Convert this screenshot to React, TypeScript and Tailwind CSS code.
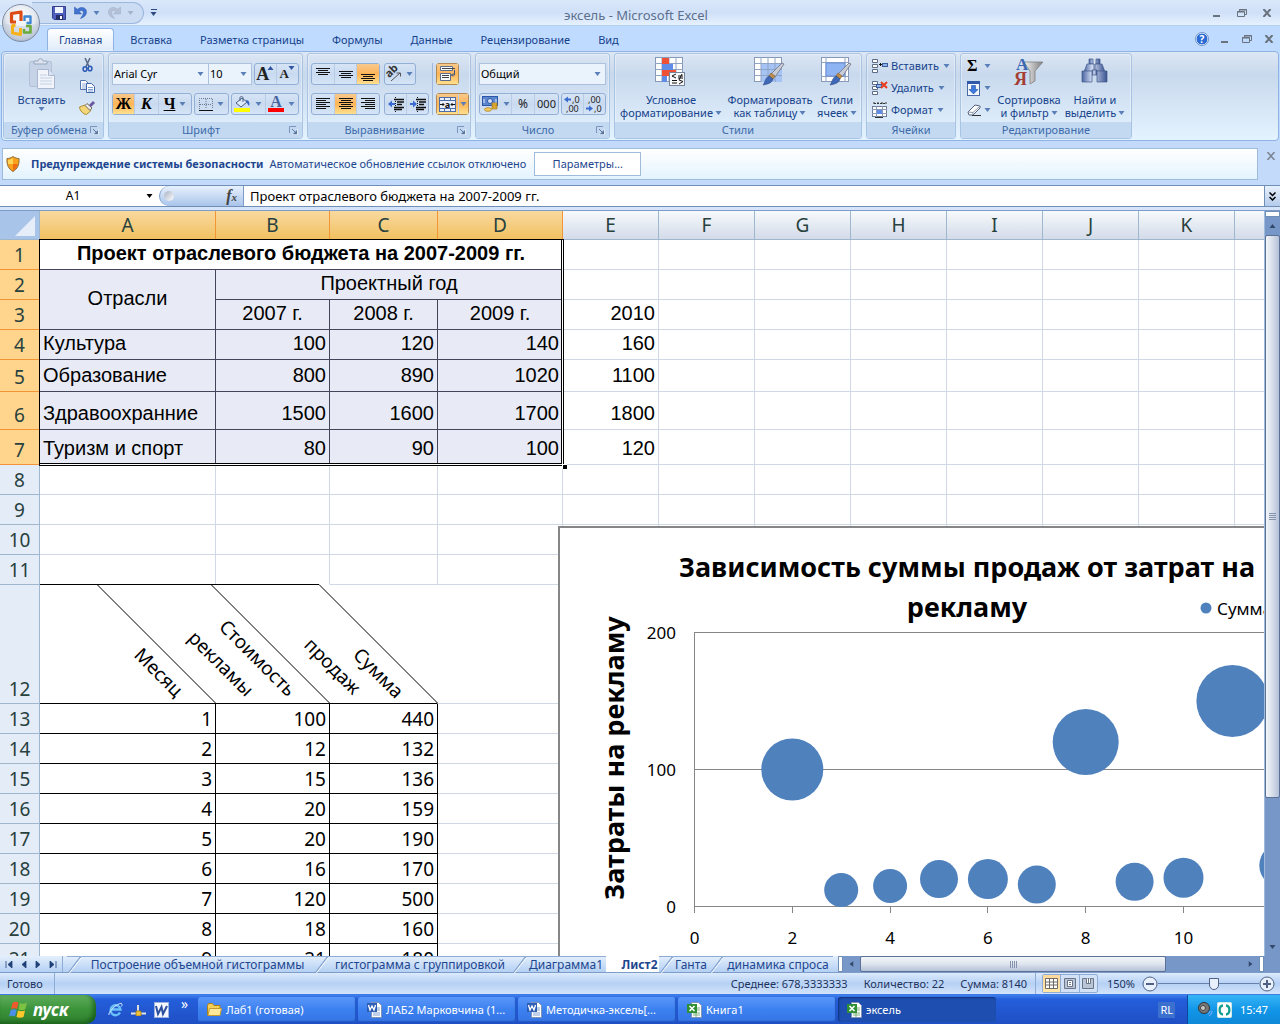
import { useState, type ReactNode } from 'react'
import clsx from 'clsx'

/* ---------- small shared pieces ---------- */

function Caret({ className }: { className?: string }) {
    return (
        <svg width="7" height="4" viewBox="0 0 7 4" className={clsx('shrink-0', className ?? 'text-[#5a7fb8]')} aria-hidden="true">
            <path d="M0.5 0h6L3.5 4z" fill="currentColor" />
        </svg>
    )
}

function Launcher() {
    return (
        <svg width="9" height="9" viewBox="0 0 9 9" aria-hidden="true">
            <path d="M0.5 7V0.5H7" fill="none" stroke="#7a94ba" />
            <path d="M3 3l3 3" stroke="#5a769e" />
            <path d="M8 4v4.5H3.5z" fill="#5a769e" />
            <path d="M8.5 3v5.5H3" fill="none" stroke="#fff" strokeOpacity=".5" />
        </svg>
    )
}

interface GroupProps {
    title: string
    className: string
    launcher?: boolean
    children: ReactNode
}

function Group({ title, className, launcher, children }: GroupProps) {
    return (
        <section
            className={clsx(
                'flex shrink-0 flex-col rounded-[3px] border border-[#a9c4e2] shadow-[inset_0_0_0_1px_rgba(255,255,255,0.35)]',
                className
            )}
        >
            <div className="min-h-0 flex-1">{children}</div>
            <div className="flex h-4 items-center rounded-b-[2px] bg-[#c2d9f1] px-1 text-[#3e6aaa]">
                <h2 className="flex-1 text-center whitespace-nowrap">{title}</h2>
                {launcher && (
                    <button aria-label={title}>
                        <Launcher />
                    </button>
                )}
            </div>
        </section>
    )
}

function ButtonSet({ children, className }: { children: ReactNode; className?: string }) {
    return (
        <div
            className={clsx(
                'flex h-[22px] divide-x divide-[#b8cce6] rounded-[3px] border border-[#93afd6] bg-linear-to-b from-[#d6e4f5] via-[#c9daf0] to-[#d5e4f6]',
                className
            )}
        >
            {children}
        </div>
    )
}

interface ToolProps {
    label: string
    active?: boolean
    className?: string
    children: ReactNode
}

function Tool({ label, active, className, children }: ToolProps) {
    return (
        <button
            aria-label={label}
            className={clsx(
                'flex h-full items-center justify-center gap-1',
                className ?? 'flex-1',
                active && 'bg-linear-to-b from-[#f8c98b] via-[#fdb456] to-[#ffe08e]'
            )}
        >
            {children}
        </button>
    )
}

function Lines({ rows, className }: { rows: [number, number, number][]; className?: string }) {
    return (
        <svg width="16" height="16" viewBox="0 0 16 16" className={className} aria-hidden="true">
            {rows.map(([x, y, w], i) => (
                <rect key={i} x={x} y={y} width={w} height="1" fill="#111" />
            ))}
        </svg>
    )
}

/* ---------- icons ---------- */

function OfficeOrb() {
    return (
        <svg width="40" height="40" viewBox="0 0 40 40" aria-hidden="true">
            <defs>
                <radialGradient id="orb" cx=".5" cy=".35" r=".65">
                    <stop offset="0" stopColor="#fff" />
                    <stop offset=".6" stopColor="#e3e8ef" />
                    <stop offset="1" stopColor="#aab6c8" />
                </radialGradient>
            </defs>
            <circle cx="20" cy="20" r="18.5" fill="url(#orb)" stroke="#7f8ea6" />
            <path d="M3 20a17 17 0 0 0 34 0c-8 4-26 4-34 0z" fill="#c3cedd" opacity=".5" />
            <g fill="none" strokeLinejoin="round">
                <path d="M15 19h-4.500V10.500L20 9v9" stroke="#dd4b14" strokeWidth="3.200" />
                <path d="M23.500 18v-4.500h6V20h-4" stroke="#3f86d2" strokeWidth="2.400" />
                <path d="M14.500 22.500h-3V30l8 1.500V25" stroke="#f6b21b" strokeWidth="3" />
                <path d="M25 23h4.500v6.500h-6.500V26" stroke="#69ac3b" strokeWidth="2.600" />
            </g>
        </svg>
    )
}

function SaveIcon() {
    return (
        <svg width="14" height="14" viewBox="0 0 14 14" aria-hidden="true">
            <path d="M.5.5h13v13H2L.5 12z" fill="#4f5fc0" stroke="#343f8f" />
            <rect x="3" y="1" width="8" height="6" fill="#eef3fc" />
            <rect x="4" y="9" width="7" height="5" fill="#232e66" />
            <rect x="8" y="10" width="2" height="3" fill="#fff" />
        </svg>
    )
}

function UndoIcon({ flipped }: { flipped?: boolean }) {
    return (
        <svg width="13" height="13" viewBox="0 0 13 13" className={flipped ? '-scale-x-100' : undefined} aria-hidden="true">
            <path
                d="M.5 1v7h7L5.300 5.500C7.500 3.600 9.500 4.500 9.300 7c-.2 2-1.500 3.500-2.800 5.500C10 11.500 12.700 9 12.500 5.500 12.200 1.500 7 0 3.300 3.300z"
                fill={flipped ? '#b4c0d6' : '#4273cf'}
                stroke={flipped ? '#a0adc4' : '#2c55ac'}
                strokeWidth=".5"
            />
        </svg>
    )
}

function PasteIcon() {
    return (
        <svg width="28" height="32" viewBox="0 0 28 32" aria-hidden="true">
            <rect x="1.500" y="3.500" width="22" height="25" rx="1.500" fill="#c6d3e6" stroke="#b3c1d8" />
            <path d="M6 6V3h4c0-3 5-3 5 0h4v3z" fill="#dce3ee" stroke="#97a7c0" />
            <path d="M9.500 11.500h11l6 6V30.500h-17z" fill="#f1f5fb" stroke="#a9b8d0" />
            <path d="M20.500 11.500v6h6" fill="#dbe4f1" stroke="#a9b8d0" />
            <path d="M12 17h7M12 20h12M12 23h12M12 26h12" stroke="#c3cfe0" />
        </svg>
    )
}

function CutIcon() {
    return (
        <svg width="11" height="14" viewBox="0 0 11 14" fill="none" aria-hidden="true">
            <path d="M3 0l4 8.500M8 0L4 8.500" stroke="#566783" strokeWidth="1.500" />
            <ellipse cx="3" cy="11" rx="1.900" ry="2.300" stroke="#2d5cb5" strokeWidth="1.600" />
            <ellipse cx="8" cy="10.500" rx="1.900" ry="2.300" stroke="#2d5cb5" strokeWidth="1.600" />
        </svg>
    )
}

function CopyIcon() {
    return (
        <svg width="15" height="13" viewBox="0 0 15 13" aria-hidden="true">
            <path d="M.5.5h5l3 3v6h-8z" fill="#fff" stroke="#5476ae" />
            <path d="M2 4h4M2 6h4M2 8h4" stroke="#8eacd8" />
            <path d="M6.500 3.500h5l3 3v6h-8z" fill="#fff" stroke="#3e65a8" />
            <path d="M8 7.500h5M8 9.500h5M8 11h5" stroke="#7d9fd4" />
        </svg>
    )
}

function BrushIcon() {
    return (
        <svg width="16" height="14" viewBox="0 0 16 14" aria-hidden="true">
            <path d="M.5 6l5.500-2 6 5.500-4.500 4C4 13 1 10 .5 6z" fill="#f3d879" stroke="#b08b31" />
            <path d="M6 4.500l2-2 5 4.500-2 2.500z" fill="#e8ebf3" stroke="#7b6a4a" />
            <path d="M10 4l4-4 2 2-4 4z" fill="#6a55a0" />
        </svg>
    )
}

function BordersIcon() {
    return (
        <svg width="14" height="13" viewBox="0 0 14 13" fill="none" aria-hidden="true">
            <path d="M.5 11V.5h13V11M7 1v10M1 6.500h12" stroke="#6d7b92" strokeDasharray="1 1" />
            <path d="M0 12.500h14" stroke="#111" />
        </svg>
    )
}

function FillIcon() {
    return (
        <svg width="17" height="16" viewBox="0 0 17 16" aria-hidden="true">
            <path d="M2 7l6-5 5 4-6 5z" fill="#dfeaf8" stroke="#4a5f84" />
            <path d="M6 5V1.500c1-2 3-1 3 .5v4" fill="none" stroke="#4a5f84" />
            <path d="M12 4c3 0 4 3 3 6l-2-3z" fill="#3366c4" />
            <rect y="12" width="16" height="4" fill="#ffff00" />
        </svg>
    )
}

function FontColorIcon() {
    return (
        <svg width="16" height="16" viewBox="0 0 16 16" className="overflow-visible font-['Liberation_Serif',serif]" aria-hidden="true">
            <text x="8" y="11" textAnchor="middle" fontSize="16" fontWeight="bold" fill="#45649f">
                A
            </text>
            <rect y="12" width="16" height="4" fill="#ff0000" />
        </svg>
    )
}

function OrientationIcon() {
    return (
        <svg width="15" height="15" viewBox="0 0 15 15" className="overflow-visible" aria-hidden="true">
            <text x="0" y="8" fontSize="11" fontWeight="bold" fill="#333" transform="rotate(-45 5 7)">
                ab
            </text>
            <path d="M4 14L13 6M9.500 6H13.500V9.500" fill="none" stroke="#555" />
        </svg>
    )
}

function IndentIcon({ right }: { right?: boolean }) {
    return (
        <svg width="16" height="15" viewBox="0 0 16 15" aria-hidden="true">
            <path d="M7.500 0v15" stroke="#111" strokeDasharray="1 1" />
            <path d="M6 2.500h10M9 5h7M9 7.500h5M6 10.500h10M6 12.500h8" stroke="#111" strokeWidth="1.500" />
            <path d={right ? 'M0 6h3V3.500L7 7 3 10.500V8H0z' : 'M7 6H4V3.500L0 7l4 3.500V8h3z'} fill="#3a6bd0" />
        </svg>
    )
}

function WrapIcon() {
    return (
        <svg width="17" height="16" viewBox="0 0 17 16" aria-hidden="true">
            <path d="M1.500.5h12v4h-12z" fill="#f6f8fc" stroke="#5b6b88" />
            <path d="M3 2.500h13" stroke="#444" />
            <path d="M1.500 7.500h10v7h-10z" fill="#f6f8fc" stroke="#5b6b88" />
            <path d="M3 9.500h7M3 11.500h7" stroke="#444" />
            <path d="M15.500 4v5h-3M14 7.500L12.500 9l1.500 1.500" fill="none" stroke="#35518a" />
        </svg>
    )
}

function MergeIcon() {
    return (
        <svg width="17" height="15" viewBox="0 0 17 15" className="overflow-visible" aria-hidden="true">
            <rect x=".5" y=".5" width="16" height="14" fill="#e9f0fb" stroke="#4c6ea8" />
            <path d="M0 3.500h17M0 11.500h17M5.500 0v3M11.500 0v3M5.500 12v3M11.500 12v3" stroke="#4c6ea8" />
            <text x="8.500" y="10.500" textAnchor="middle" fontSize="9" fontWeight="bold" fill="#111">
                a
            </text>
            <path d="M1 7.500h4M12 7.500h4M3.500 6L5 7.500 3.500 9M13.500 6L12 7.500 13.500 9" fill="none" stroke="#111" />
        </svg>
    )
}

function MoneyIcon() {
    return (
        <svg width="17" height="16" viewBox="0 0 17 16" aria-hidden="true">
            <rect x=".5" y=".5" width="15" height="9" fill="#5c87d0" stroke="#2c57a5" />
            <circle cx="8" cy="5" r="2.500" fill="#d4e2f8" stroke="#2c57a5" />
            <path d="M2 3v4M14 3v4" stroke="#e4edfb" />
            <path d="M10 7h5v6h-5z" fill="#f0bf3f" stroke="#a87412" strokeWidth=".7" />
            <path d="M10 9h5M10 11h5" stroke="#a87412" strokeWidth=".7" />
            <ellipse cx="6" cy="13.500" rx="3.500" ry="1.800" fill="#f5cf5c" stroke="#a87412" strokeWidth=".7" />
        </svg>
    )
}

function DecimalIcon({ less }: { less?: boolean }) {
    return (
        <svg width="17" height="16" viewBox="0 0 17 16" fontSize="9" fill="#222" className="overflow-visible" aria-hidden="true">
            <text x={less ? 2 : 8} y="7">{less ? ',00' : ',0'}</text>
            <text x={less ? 8 : 2} y="16">{less ? ',0' : ',00'}</text>
            <path
                d={less ? 'M0 11.500h3V9.500l4 3-4 3v-2H0z' : 'M7 2.500H4V.5L0 3.500l4 3v-2h3z'}
                fill="#3a6bd0"
            />
        </svg>
    )
}

function GridBase({ tint }: { tint?: boolean }) {
    return (
        <>
            <rect x=".5" y=".5" width="27" height="24" fill="#fff" stroke="#8798b8" />
            {tint && <rect x="7" y="6" width="21" height="19" fill="#a6c3f5" />}
            <path d="M7 0v25M14 0v25M21 0v25M0 6.500h28M0 12.500h28M0 18.500h28" stroke="#8fa3c4" fill="none" />
        </>
    )
}

function PaintBrush() {
    return (
        <>
            <path d="M28 6l2 1-9 13-4-3z" fill="#c7ccd6" stroke="#6c7483" strokeWidth=".8" />
            <path d="M17 16l4 3-2 3-4-3z" fill="#c18f4a" stroke="#7d5a28" strokeWidth=".6" />
            <path d="M15 19l4 3c-1 4-5 5-10 6 2-2 2-7 6-9z" fill="#3f69b8" stroke="#274682" strokeWidth=".6" />
        </>
    )
}

function ConditionalIcon() {
    return (
        <svg width="32" height="30" viewBox="0 0 32 30" aria-hidden="true">
            <GridBase />
            <rect x="7" y="1" width="7" height="6" fill="#ee5135" />
            <rect x="7" y="7" width="11" height="6" fill="#5e8ce6" />
            <rect x="7" y="13" width="14" height="6" fill="#ee5135" />
            <rect x="7" y="19" width="5" height="6" fill="#5e8ce6" />
            <rect x="14.500" y="15.500" width="15" height="13" fill="#f7f8fa" stroke="#76839b" />
            <path d="M21 17l-4 2 4 2M17 23.500h5M17 26h5M23 19h5M23 21h5M27 17l-3 6M24 23l4 1.500-4 2.500" fill="none" stroke="#111" />
        </svg>
    )
}

function TableStyleIcon() {
    return (
        <svg width="32" height="30" viewBox="0 0 32 30" aria-hidden="true">
            <GridBase tint />
            <PaintBrush />
        </svg>
    )
}

function CellStyleIcon() {
    return (
        <svg width="32" height="30" viewBox="0 0 32 30" aria-hidden="true">
            <rect x=".5" y=".5" width="27" height="24" fill="#fff" stroke="#8798b8" />
            <path d="M5 0v25M24 0v25M0 5.500h28M0 19.500h28" stroke="#8fa3c4" fill="none" />
            <rect x="5" y="6" width="19" height="13" fill="#8fb4f4" stroke="#6d90d2" />
            <PaintBrush />
        </svg>
    )
}

function CellsIcon({ kind }: { kind: 'insert' | 'delete' | 'format' }) {
    if (kind === 'format') {
        return (
            <svg width="16" height="16" viewBox="0 0 16 16" aria-hidden="true">
                <path d="M2 1.500h12M2 0v3M14 0v3M6 0v3M10 0v3" stroke="#333" strokeDasharray="2 1" />
                <rect x=".5" y="4.500" width="14" height="10" fill="#fff" stroke="#6d7d99" />
                <path d="M0 7.500h15M0 11.500h15M4.500 4v11M10.500 4v11" stroke="#8a99b5" />
                <rect x="5" y="8" width="5" height="4" fill="#5e8ce6" />
                <path d="M3 15.500h8" stroke="#333" />
            </svg>
        )
    }
    return (
        <svg width="16" height="14" viewBox="0 0 16 14" aria-hidden="true">
            <path d="M.5.5h5v3h-5zM.5 5.500h5v3h-5zM.5 10.500h5v3h-5z" fill="#fff" stroke="#5d6c87" />
            {kind === 'insert' ? (
                <>
                    <path d="M7 5.500h3M8.500 4v3" stroke="#111" />
                    <rect x="10.500" y="4.500" width="5" height="3" fill="#8fb0ea" stroke="#3c5c98" />
                </>
            ) : (
                <>
                    <rect x="4.500" y="3.500" width="5" height="3" fill="#8fb0ea" stroke="#3c5c98" />
                    <path d="M9 1l6 6M15 1L9 7" stroke="#ea3c1c" strokeWidth="2" />
                </>
            )}
        </svg>
    )
}

function FillDownIcon() {
    return (
        <svg width="13" height="15" viewBox="0 0 13 15" aria-hidden="true">
            <rect x=".5" y=".5" width="12" height="14" fill="#f3f7fd" stroke="#4a6aa6" />
            <path d="M0 1.500h13" stroke="#2f5aa8" strokeWidth="3" />
            <path d="M4.500 4.500h4v4h2.500l-4.500 4.500L2 8.500h2.500z" fill="#3d78dc" stroke="#2355a8" strokeWidth=".6" />
        </svg>
    )
}

function EraserIcon() {
    return (
        <svg width="14" height="12" viewBox="0 0 14 12" aria-hidden="true">
            <path d="M1 8l7-7 5 1v2l-7 7H2z" fill="#fff" stroke="#53617c" />
            <path d="M1 8l5 .5L13 2M6 8.500V11" fill="none" stroke="#8a97b0" />
            <path d="M5 11.500h9" stroke="#333" />
        </svg>
    )
}

function SortIcon() {
    return (
        <svg width="32" height="30" viewBox="0 0 32 30" className="overflow-visible font-['Liberation_Serif',serif]" aria-hidden="true">
            <defs>
                <linearGradient id="funnel">
                    <stop offset="0" stopColor="#f3f3f3" />
                    <stop offset="1" stopColor="#7e7e80" />
                </linearGradient>
            </defs>
            <path d="M11 5h19l-8 9v10l-5 3V14z" fill="url(#funnel)" stroke="#808084" strokeWidth=".8" />
            <text x="3" y="13" fontSize="17" fontWeight="bold" fill="#3c67b4">
                А
            </text>
            <text x="1" y="28" fontSize="18" fontWeight="bold" fill="#a43d36">
                Я
            </text>
        </svg>
    )
}

function FindIcon() {
    return (
        <svg width="30" height="28" viewBox="0 0 30 28" aria-hidden="true">
            <defs>
                <linearGradient id="lens">
                    <stop offset="0" stopColor="#4a64a2" />
                    <stop offset=".4" stopColor="#d3def3" />
                    <stop offset="1" stopColor="#3a5390" />
                </linearGradient>
            </defs>
            <g fill="url(#lens)" stroke="#40568a" strokeWidth=".7">
                <path d="M9 2h4v5H9zM16 2h4v5h-4z" />
                <path d="M7 7h7v8H4zM15 7h7l3 8H15z" />
                <path d="M12 13h5v5h-5z" />
                <path d="M2 14h10v11H2zM17 14h10v11H17z" />
            </g>
        </svg>
    )
}

function HelpIcon() {
    return (
        <svg width="14" height="14" viewBox="0 0 14 14" className="overflow-visible" aria-hidden="true">
            <circle cx="7" cy="7" r="6" fill="#2b6bd5" stroke="#fff" />
            <circle cx="7" cy="7" r="6.500" fill="none" stroke="#456fb5" strokeWidth=".7" />
            <text x="7" y="10.500" textAnchor="middle" fontSize="10" fontWeight="bold" fill="#fff">
                ?
            </text>
        </svg>
    )
}

function WindowControls({ className }: { className: string }) {
    return (
        <div className={clsx('flex items-center text-[#6a727e]', className)}>
            <button aria-label="Свернуть" className="flex h-3 w-[9px] items-end pb-px">
                <svg width="8" height="3" viewBox="0 0 8 3"><path d="M0 1h7" stroke="currentColor" strokeWidth="2" /></svg>
            </button>
            <button aria-label="Восстановить">
                <svg width="10" height="8" viewBox="0 0 10 8" fill="none" stroke="currentColor">
                    <path d="M2.500 2V.5h7v5H8M2 1h8M0 3h8M.5 2.500h7v5h-7z" />
                </svg>
            </button>
            <button aria-label="Закрыть">
                <svg width="10" height="8" viewBox="0 0 10 8"><path d="M1.500 0l7 8M8.500 0l-7 8" stroke="currentColor" strokeWidth="2" /></svg>
            </button>
        </div>
    )
}

/* ---------- title bar and ribbon ---------- */

function TitleBar() {
    return (
        <header className="flex h-[26px] items-center border-b border-[#b4d0f0] bg-linear-to-b from-[#dbe8fa] via-[#cfe0f8] to-[#e6f1fd]">
            <div className="flex flex-1 items-center">
                <div className="ml-8 flex h-[22px] w-28 items-center rounded-r-full border border-l-0 border-[#9db8df] bg-[#cbdcf3] pl-5">
                    <button aria-label="Сохранить"><SaveIcon /></button>
                    <button aria-label="Отменить" className="ml-2 flex items-center gap-1.5"><UndoIcon /><Caret /></button>
                    <button aria-label="Вернуть" className="ml-2 flex items-center gap-1.5"><UndoIcon flipped /><Caret className="text-[#a6b3ca]" /></button>
                </div>
                <button aria-label="Настройка панели" className="ml-1.5 flex flex-col items-center gap-0.5">
                    <span className="h-px w-1.5 bg-[#2c4a80]" />
                    <Caret className="text-[#2c4a80]" />
                </button>
            </div>
            <h1 className="pt-1 text-[13px] text-[#5c6f8f]">эксель - Microsoft Excel</h1>
            <div className="flex flex-1 justify-end pr-2">
                <WindowControls className="gap-[15px]" />
            </div>
        </header>
    )
}

const MENU = ['Главная', 'Вставка', 'Разметка страницы', 'Формулы', 'Данные', 'Рецензирование', 'Вид']

function MenuTabs() {
    return (
        <nav className="flex h-[25px] items-end bg-[#bfdbff] pl-[45px] text-[#15428b]">
            {MENU.map((name, i) => (
                <button
                    key={name}
                    className={clsx(
                        'mx-0.5 flex h-[23px] items-center rounded-t-[4px] border px-[11px] whitespace-nowrap',
                        i === 0 ? 'border-[#8db2e3] border-b-[#ebf3fe] bg-linear-to-b from-white to-[#e1ecfa]' : 'border-transparent'
                    )}
                >
                    {name}
                </button>
            ))}
            <div className="ml-auto flex h-full items-center gap-3 pr-1.5">
                <button aria-label="Справка"><HelpIcon /></button>
                <WindowControls className="gap-3" />
            </div>
        </nav>
    )
}

interface PickProps {
    label: string
    value: string
    className: string
}

function Pick({ label, value, className }: PickProps) {
    return (
        <div className={clsx('relative h-[22px] border border-[#abc1de] bg-[#eaf2fb] text-black', className)}>
            <select aria-label={label} defaultValue={value} className="h-full w-full appearance-none bg-transparent pl-px outline-none">
                <option>{value}</option>
            </select>
            <Caret className="pointer-events-none absolute top-2 right-1 text-[#5a7fb8]" />
        </div>
    )
}

function BigButton({ icon, lines, className }: { icon: ReactNode; lines: [string, string]; className: string }) {
    return (
        <button className={clsx('flex flex-col items-center pt-[3px]', className)}>
            <span className="flex h-9 items-start justify-center">{icon}</span>
            <span className="leading-[13px] whitespace-nowrap">{lines[0]}</span>
            <span className="flex items-center gap-0.5 leading-[13px] whitespace-nowrap">
                {lines[1]}
                <Caret />
            </span>
        </button>
    )
}

function Ribbon() {
    return (
        <div className="bg-[#bfdbff] px-px">
            <div className="flex h-[90px] gap-1 rounded-[4px] border border-[#8db2e3] bg-linear-to-b from-[#dde7f4] from-0% via-[#c9d9ed] via-25% to-[#e3f3ff] to-100% px-px py-px text-[#15428b]">
                <Group title="Буфер обмена" launcher className="w-[101px]">
                    <div className="flex pt-1">
                        <button className="flex w-[75px] flex-col items-center">
                            <PasteIcon />
                            <span className="mt-0.5 leading-[15px]">Вставить</span>
                            <Caret />
                        </button>
                        <div className="flex flex-col items-center gap-2">
                            <button aria-label="Вырезать"><CutIcon /></button>
                            <button aria-label="Копировать"><CopyIcon /></button>
                            <button aria-label="Формат по образцу"><BrushIcon /></button>
                        </div>
                    </div>
                </Group>

                <Group title="Шрифт" launcher className="w-[195px]">
                    <div className="flex flex-col gap-2 px-[3px] pt-[9px]">
                        <div className="flex">
                            <Pick label="Шрифт" value="Arial Cyr" className="w-[97px]" />
                            <Pick label="Размер шрифта" value="10" className="w-[43px] border-l-0" />
                            <ButtonSet className="ml-auto w-[45px] font-['Liberation_Serif',serif] font-bold text-[#222]">
                                <Tool label="Увеличить размер" className="w-1/2">
                                    <span className="flex items-start text-[18px]">A<Caret className="-ml-0.5 rotate-180 text-[#2f55a0]" /></span>
                                </Tool>
                                <Tool label="Уменьшить размер" className="w-1/2">
                                    <span className="flex items-start text-[13px]">A<Caret className="-ml-px text-[#2f55a0]" /></span>
                                </Tool>
                            </ButtonSet>
                        </div>
                        <div className="flex justify-between">
                            <ButtonSet className="w-20 font-['Liberation_Serif',serif] text-[16px] font-bold text-black">
                                <Tool label="Полужирный" active className="w-[22px]">Ж</Tool>
                                <Tool label="Курсив" className="w-[24px]"><i>К</i></Tool>
                                <Tool label="Подчеркнутый"><u>Ч</u><Caret /></Tool>
                            </ButtonSet>
                            <ButtonSet className="w-[35px]">
                                <Tool label="Границы"><BordersIcon /><Caret /></Tool>
                            </ButtonSet>
                            <ButtonSet className="w-[68px]">
                                <Tool label="Цвет заливки"><FillIcon /><Caret /></Tool>
                                <Tool label="Цвет текста"><FontColorIcon /><Caret /></Tool>
                            </ButtonSet>
                        </div>
                    </div>
                </Group>

                <Group title="Выравнивание" launcher className="w-[164px]">
                    <div className="flex pt-[9px] pl-[3px]">
                        <div className="flex w-[121px] flex-col gap-2">
                            <div className="flex gap-1">
                                <ButtonSet className="w-[69px]">
                                    <Tool label="По верхнему краю"><Lines rows={[[1, 2, 14], [3, 4, 10], [1, 6, 14], [3, 8, 10]]} /></Tool>
                                    <Tool label="По середине"><Lines rows={[[1, 5, 14], [3, 7, 10], [1, 9, 14], [3, 11, 10]]} /></Tool>
                                    <Tool label="По нижнему краю" active><Lines rows={[[1, 8, 14], [3, 10, 10], [1, 12, 14], [3, 14, 10]]} /></Tool>
                                </ButtonSet>
                                <ButtonSet className="w-[32px]">
                                    <Tool label="Ориентация"><OrientationIcon /><Caret /></Tool>
                                </ButtonSet>
                            </div>
                            <div className="flex gap-1">
                                <ButtonSet className="w-[69px]">
                                    <Tool label="По левому краю"><Lines rows={[[1, 2, 14], [1, 4, 10], [1, 6, 14], [1, 8, 10], [1, 10, 14], [1, 12, 10]]} /></Tool>
                                    <Tool label="По центру" active><Lines rows={[[1, 2, 14], [3, 4, 10], [1, 6, 14], [3, 8, 10], [1, 10, 14], [3, 12, 10]]} /></Tool>
                                    <Tool label="По правому краю"><Lines rows={[[1, 2, 14], [5, 4, 10], [1, 6, 14], [5, 8, 10], [1, 10, 14], [5, 12, 10]]} /></Tool>
                                </ButtonSet>
                                <ButtonSet className="w-[45px]">
                                    <Tool label="Уменьшить отступ"><IndentIcon /></Tool>
                                    <Tool label="Увеличить отступ"><IndentIcon right /></Tool>
                                </ButtonSet>
                            </div>
                        </div>
                        <div className="flex flex-col gap-2 border-l border-[#9db8da] pl-[3px]">
                            <ButtonSet className="w-[23px] border-[#b08a52]">
                                <Tool label="Перенос текста" active><WrapIcon /></Tool>
                            </ButtonSet>
                            <ButtonSet className="w-[33px] border-[#b08a52]">
                                <Tool label="Объединить" active className="w-[22px]"><MergeIcon /></Tool>
                                <Tool label="Параметры объединения" active><Caret /></Tool>
                            </ButtonSet>
                        </div>
                    </div>
                </Group>

                <Group title="Число" launcher className="w-[135px]">
                    <div className="flex flex-col gap-2 px-[3px] pt-[9px]">
                        <Pick label="Числовой формат" value="Общий" className="w-full" />
                        <div className="flex justify-between">
                            <ButtonSet className="w-20 text-[12px] text-[#222]">
                                <Tool label="Финансовый формат"><MoneyIcon /><Caret /></Tool>
                                <Tool label="Процентный формат" className="w-[23px]">%</Tool>
                                <Tool label="Разделители разрядов" className="w-[23px]"><span className="text-[11px]">000</span></Tool>
                            </ButtonSet>
                            <ButtonSet className="w-[45px]">
                                <Tool label="Увеличить разрядность"><DecimalIcon /></Tool>
                                <Tool label="Уменьшить разрядность"><DecimalIcon less /></Tool>
                            </ButtonSet>
                        </div>
                    </div>
                </Group>

                <Group title="Стили" className="w-[248px]">
                    <div className="flex">
                        <BigButton icon={<ConditionalIcon />} lines={['Условное', 'форматирование']} className="w-[112px]" />
                        <BigButton icon={<TableStyleIcon />} lines={['Форматировать', 'как таблицу']} className="w-[86px]" />
                        <BigButton icon={<CellStyleIcon />} lines={['Стили', 'ячеек']} className="w-[48px]" />
                    </div>
                </Group>

                <Group title="Ячейки" className="w-[90px]">
                    <div className="flex flex-col gap-1 pt-[3px] pl-[5px]">
                        <button className="flex h-[18px] items-center gap-[3px]"><CellsIcon kind="insert" />Вставить<Caret className="ml-px text-[#5a7fb8]" /></button>
                        <button className="flex h-[18px] items-center gap-[3px]"><CellsIcon kind="delete" />Удалить<Caret className="ml-px text-[#5a7fb8]" /></button>
                        <button className="flex h-[18px] items-center gap-[3px]"><CellsIcon kind="format" />Формат<Caret className="ml-px text-[#5a7fb8]" /></button>
                    </div>
                </Group>

                <Group title="Редактирование" className="w-[172px]">
                    <div className="flex">
                        <div className="flex w-[34px] flex-col gap-1 pt-[3px] pr-1 pl-1.5">
                            <button aria-label="Сумма" className="flex h-[18px] items-center justify-between">
                                <span className="font-['Liberation_Serif',serif] text-[16px] leading-none font-bold text-black">Σ</span>
                                <Caret />
                            </button>
                            <button aria-label="Заполнить" className="flex h-[18px] items-center justify-between"><FillDownIcon /><Caret /></button>
                            <button aria-label="Очистить" className="flex h-[18px] items-center justify-between"><EraserIcon /><Caret /></button>
                        </div>
                        <BigButton icon={<SortIcon />} lines={['Сортировка', 'и фильтр']} className="w-[68px]" />
                        <BigButton icon={<FindIcon />} lines={['Найти и', 'выделить']} className="w-[64px]" />
                    </div>
                </Group>
            </div>
        </div>
    )
}

function SecurityBar() {
    return (
        <div className="flex h-11 shrink-0 bg-[#c4dafa] pt-[7px] pl-0.5 text-[#1e468f]">
            <div className="flex h-[32px] min-w-0 flex-1 items-center border border-[#9ebbdc] bg-linear-to-b from-white to-[#e3f3fd] pl-[3px]">
                <svg width="14" height="16" viewBox="0 0 14 16" aria-hidden="true">
                    <path d="M7 .5C9 2 11 2.500 13 2.500c.5 6-1.500 10.500-6 13C2.500 13 .5 8.500 1 2.500 3 2.500 5 2 7 .5z" fill="#f9a11b" stroke="#8b6a3a" />
                    <path d="M7 2v6H2V4c2-.2 3.500-.8 5-2z" fill="#ffd558" />
                    <path d="M7 8h5c-.5 3-2 5-5 6.500z" fill="#ef6e14" />
                </svg>
                <strong className="ml-[11px] whitespace-nowrap">Предупреждение системы безопасности</strong>
                <span className="ml-1.5 whitespace-nowrap">Автоматическое обновление ссылок отключено</span>
                <button className="ml-2 h-6 w-[107px] border border-[#9ebbdc] bg-white">Параметры...</button>
            </div>
            <button aria-label="Закрыть панель" className="h-4 w-[22px] pl-2">
                <svg width="10" height="8" viewBox="0 0 10 8"><path d="M1.500 0l7 8M8.500 0l-7 8" stroke="#7a828e" strokeWidth="1.500" /></svg>
            </button>
        </div>
    )
}

function FormulaBar() {
    return (
        <div className="bg-[#d5e4f8] pb-[3px] text-[13px] text-black">
            <div className="flex h-[22px] border-y border-[#6f8fb9] bg-white">
                <div className="flex w-[159px] items-center pr-1.5">
                    <input aria-label="Имя" defaultValue="A1" className="min-w-0 flex-1 text-center text-[12px] outline-none" />
                    <Caret className="text-black" />
                </div>
                <div className="flex w-[85px] items-center justify-between rounded-l-full border-r border-l border-[#7d9cc8] bg-linear-to-b from-[#e8f1fd] to-[#a9c4ea] pr-1.5 pl-1">
                    <span className="size-2.5 rounded-full bg-linear-to-br from-[#a9b3c4] to-white" />
                    <button className="font-['Liberation_Serif',serif] text-[16px] font-bold text-[#444] italic" aria-label="Вставить функцию">
                        f<span className="text-[11px]">x</span>
                    </button>
                </div>
                <input
                    aria-label="Строка формул"
                    defaultValue="Проект отраслевого бюджета на 2007-2009 гг."
                    className="min-w-0 flex-1 pl-1.5 outline-none"
                />
                <button aria-label="Развернуть" className="flex w-4 items-center justify-center border-l border-[#6f8fb9] bg-linear-to-b from-[#e8f1fd] to-[#b4cbeb]">
                    <svg width="7" height="9" viewBox="0 0 7 9" fill="none" stroke="#000" strokeWidth="1.500"><path d="M.5.5l3 3 3-3M.5 5l3 3 3-3" /></svg>
                </button>
            </div>
        </div>
    )
}

/* ---------- worksheet ---------- */

interface Cell {
    text?: ReactNode
    className?: string
    colSpan?: number
    rowSpan?: number
}

const COLUMNS = [
    { name: 'A', width: 'w-[176px]' },
    { name: 'B', width: 'w-[114px]' },
    { name: 'C', width: 'w-[108px]' },
    { name: 'D', width: 'w-[125px]' },
    ...['E', 'F', 'G', 'H', 'I', 'J', 'K', 'L', 'M', 'N'].map((name) => ({ name, width: 'w-[96px]' })),
]

const GRID = 'border-[#d0d7e5]'
const SELECTED = 'border-[#43465a] bg-[#e8ebf5]'
const ARIAL = "font-['Liberation_Sans',sans-serif]"
const BOXED = 'border-black text-right'

function budgetRow(name: string, values: [string, string, string, string]): Cell[] {
    return [
        { text: name, className: clsx(SELECTED, ARIAL) },
        ...values.slice(0, 3).map((text) => ({ text, className: clsx(SELECTED, ARIAL, 'text-right') })),
        { text: values[3], className: clsx(GRID, ARIAL, 'text-right') },
    ]
}

function SlantedHeads() {
    return (
        <svg width="398" height="118" viewBox="0 0 398 118" className="block overflow-visible" fontSize="19" fill="#000">
            <path d="M0 -.5H279M57 -.5L175.500 118M171 -.5L289.500 118M279 -.5L397.500 118" fill="none" stroke="#000" />
            <text transform="translate(93 71) rotate(45)">Месяц</text>
            <text transform="translate(178 43) rotate(45)">Стоимость</text>
            <text transform="translate(147 54) rotate(45)">рекламы</text>
            <text transform="translate(312 71) rotate(45)">Сумма</text>
            <text transform="translate(263 61) rotate(45)">продаж</text>
        </svg>
    )
}

const SALES = [
    [100, 440], [12, 132], [15, 136], [20, 159], [20, 190], [16, 170], [120, 500], [18, 160], [21, 180], [150, 600], [30, 210],
]

const ROWS: { height: string; cells: Cell[] }[] = [
    {
        height: 'h-[30px]',
        cells: [{ text: 'Проект отраслевого бюджета на 2007-2009 гг.', colSpan: 4, className: clsx('border-[#43465a] text-center font-bold', ARIAL) }],
    },
    {
        height: 'h-[30px]',
        cells: [
            { text: 'Отрасли', rowSpan: 2, className: clsx(SELECTED, ARIAL, 'text-center align-middle') },
            { text: 'Проектный год', colSpan: 3, className: clsx(SELECTED, ARIAL, 'text-center') },
        ],
    },
    {
        height: 'h-[30px]',
        cells: [
            { text: '2007 г.', className: clsx(SELECTED, ARIAL, 'text-center') },
            { text: '2008 г.', className: clsx(SELECTED, ARIAL, 'text-center') },
            { text: '2009 г.', className: clsx(SELECTED, ARIAL, 'text-center') },
            { text: '2010', className: clsx(GRID, ARIAL, 'text-right') },
        ],
    },
    { height: 'h-[30px]', cells: budgetRow('Культура', ['100', '120', '140', '160']) },
    { height: 'h-[32px]', cells: budgetRow('Образование', ['800', '890', '1020', '1100']) },
    { height: 'h-[38px]', cells: budgetRow('Здравоохранние', ['1500', '1600', '1700', '1800']) },
    { height: 'h-[35px]', cells: budgetRow('Туризм и спорт', ['80', '90', '100', '120']) },
    { height: 'h-[30px]', cells: [] },
    { height: 'h-[30px]', cells: [] },
    { height: 'h-[30px]', cells: [] },
    { height: 'h-[30px]', cells: [{ className: 'border-[#d0d7e5] border-b-transparent' }, { className: 'border-[#d0d7e5] border-b-transparent' }] },
    {
        height: 'h-[119px]',
        cells: [
            { text: <SlantedHeads />, colSpan: 3, className: 'border-black border-r-transparent p-0!' },
            { className: 'border-[#d0d7e5] border-r-transparent' },
        ],
    },
    ...SALES.map(([cost, total], i) => ({
        height: 'h-[30px]',
        cells: [
            { text: i + 1, className: BOXED },
            { text: cost, className: BOXED },
            { text: total, className: BOXED },
        ],
    })),
]

function padCells(cells: Cell[], rowIndex: number): Cell[] {
    const used = cells.reduce((sum, c) => sum + (c.colSpan ?? 1), 0) + (rowIndex === 2 ? 1 : 0)
    return [...cells, ...Array.from({ length: COLUMNS.length - used }, () => ({ className: GRID }))]
}

function Grid() {
    return (
        <table className="w-px table-fixed border-separate border-spacing-0 text-[19px] leading-7 text-black">
            <colgroup>
                <col className="w-10" />
                {COLUMNS.map((c) => (
                    <col key={c.name} className={c.width} />
                ))}
            </colgroup>
            <thead>
                <tr className="h-[29px] text-[#27413e]">
                    <th className="border-r border-b border-[#9eb6ce] bg-[#a9c4e9] p-0">
                        <svg width="39" height="28" viewBox="0 0 39 28" className="block" aria-hidden="true">
                            <path d="M35 5v20H15z" fill="#e4edf8" />
                        </svg>
                    </th>
                    {COLUMNS.map((c, i) => (
                        <th
                            key={c.name}
                            className={clsx(
                                'border-r border-b bg-linear-to-b p-0 font-normal',
                                i < 4 ? 'border-[#f29536] from-[#f9d99f] to-[#f1c15f]' : 'border-[#9eb6ce] from-[#f7fafc] to-[#d3dbe9]'
                            )}
                        >
                            {c.name}
                        </th>
                    ))}
                </tr>
            </thead>
            <tbody>
                {ROWS.map((row, i) => (
                    <tr key={i} className={row.height}>
                        <th
                            className={clsx(
                                'border-r border-b p-0 align-bottom font-normal text-[#27413e]',
                                i < 7 ? 'border-[#f29536] bg-[#ffd58d]' : 'border-[#9eb6ce] bg-[#e4ecf7]'
                            )}
                        >
                            {i + 1}
                        </th>
                        {padCells(row.cells, i).map((cell, j) => (
                            <td
                                key={j}
                                colSpan={cell.colSpan}
                                rowSpan={cell.rowSpan}
                                className={clsx(
                                    'border-r border-b px-[3px] py-0 whitespace-nowrap',
                                    cell.className,
                                    !cell.className?.includes('align-middle') && 'align-bottom',
                                    cell.className?.includes('Liberation') && 'pb-1 text-[20px] leading-6'
                                )}
                            >
                                {cell.text}
                            </td>
                        ))}
                    </tr>
                ))}
            </tbody>
        </table>
    )
}

/* ---------- bubble chart ---------- */

const BUBBLES = [
    { x: 2, y: 100, r: 31 },
    { x: 3, y: 12, r: 17 },
    { x: 4, y: 15, r: 17 },
    { x: 5, y: 20, r: 19 },
    { x: 6, y: 20, r: 20 },
    { x: 7, y: 16, r: 19 },
    { x: 8, y: 120, r: 33 },
    { x: 9, y: 18, r: 19 },
    { x: 10, y: 21, r: 20 },
    { x: 11, y: 150, r: 36 },
    { x: 12, y: 30, r: 22 },
]

const px = (v: number) => 134.5 + v * 48.9
const py = (v: number) => 378.5 - v * 1.37

function BubbleChart() {
    return (
        <div className="absolute top-[315px] right-0 bottom-0 left-[558px] overflow-hidden border-t-2 border-l-2 border-[#868686] bg-white">
            <svg className="block h-full w-full" fontSize="17" role="img" aria-label="Зависимость суммы продаж от затрат на рекламу">
                <defs>
                    <clipPath id="plot">
                        <rect x="135" y="0" width="900" height="379" />
                    </clipPath>
                </defs>
                <g fontSize="27" fontWeight="bold" textAnchor="middle">
                    <text x="407" y="49">Зависимость суммы продаж от затрат на</text>
                    <text x="407" y="89">рекламу</text>
                    <text transform="translate(64 230) rotate(-90)">Затраты на рекламу</text>
                </g>
                <g stroke="#868686" shapeRendering="crispEdges">
                    {[0, 100, 200].map((v) => (
                        <line key={v} x1="134" x2="100%" y1={py(v)} y2={py(v)} />
                    ))}
                    {[2, 4, 6, 8, 10].map((v) => (
                        <line key={v} x1={px(v)} x2={px(v)} y1={py(0)} y2={py(0) + 6} />
                    ))}
                    <line x1="134.500" x2="134.500" y1={py(200)} y2={py(0) + 6} />
                </g>
                <g textAnchor="end">
                    {[0, 100, 200].map((v) => (
                        <text key={v} x="116" y={py(v) + 6}>{v}</text>
                    ))}
                </g>
                <g textAnchor="middle">
                    {[0, 2, 4, 6, 8, 10].map((v) => (
                        <text key={v} x={px(v)} y="416">{v}</text>
                    ))}
                </g>
                <g clipPath="url(#plot)" fill="#4f81bd">
                    {BUBBLES.map((b) => (
                        <circle key={b.x} cx={px(b.x)} cy={py(b.y)} r={b.r} />
                    ))}
                </g>
                <circle cx="646" cy="80" r="5.500" fill="#4f81bd" />
                <text x="657" y="87">Сумма продаж</text>
            </svg>
        </div>
    )
}

function Worksheet() {
    return (
        <main className="flex min-h-0 flex-1 border-t border-[#7d9cc8]">
            <div className="relative min-w-0 flex-1 overflow-hidden bg-white">
                <Grid />
                <div className="pointer-events-none absolute top-[28px] left-[39px] h-[227px] w-[525px] border border-black">
                    <div className="h-full border-r border-b border-white shadow-[inset_-1px_-1px_0_#000]" />
                    <span className="absolute -right-1 -bottom-1 size-[5px] border-t border-l border-white bg-black" />
                </div>
                <BubbleChart />
            </div>
            <div className="flex w-4 flex-col border-l border-[#9ebbdc] bg-[#7797c8]">
                <div className="h-[6px] border border-[#6f8fb9] bg-white" />
                <div className="flex h-[18px] items-center justify-center"><Caret className="rotate-180 text-[#34486b]" /></div>
                <div className="flex min-h-0 flex-4 flex-col items-center justify-center gap-px rounded-[2px] border border-[#5d7095] bg-linear-to-r from-[#f3f6fa] via-[#d7deea] to-[#b3c0d8]">
                    {[0, 1, 2, 3].map((n) => (
                        <span key={n} className="h-px w-[7px] bg-[#8592ab]" />
                    ))}
                </div>
                <div className="min-h-0 flex-1" />
                <div className="flex h-[18px] items-center justify-center"><Caret className="text-[#34486b]" /></div>
            </div>
        </main>
    )
}

/* ---------- sheet tabs, status bar ---------- */

const SHEETS = [
    { name: 'Построение объемной гистограммы', width: 'w-[247px]' },
    { name: 'гистограмма с группировкой', width: 'w-[198px]' },
    { name: 'Диаграмма1', width: 'w-[94px]' },
    { name: 'Лист2', width: 'w-[53px]' },
    { name: 'Ганта', width: 'w-[50px]' },
    { name: 'динамика спроса', width: 'w-[124px]' },
]

function SheetTabs() {
    return (
        <div className="flex h-[17px] border-b border-[#7d9cc8] bg-linear-to-b from-[#e4effc] to-[#b4d0f3]">
            <div className="flex w-[63px] items-center justify-around border-r border-[#8facd6] px-0.5 text-[#1f3f77]">
                {['M1 0v7M7 0L3 3.500 7 7z', 'M6 0L2 3.500 6 7z', 'M2 0l4 3.500L2 7z', 'M7 0v7M1 0l4 3.500L1 7z'].map((d) => (
                    <button key={d} aria-label="Прокрутка листов">
                        <svg width="8" height="7" viewBox="0 0 8 7"><path d={d} fill="currentColor" stroke="currentColor" strokeWidth=".8" /></svg>
                    </button>
                ))}
            </div>
            <div className="flex w-[775px] pl-1 text-[12px] leading-4 text-[#1e468f]">
                {SHEETS.map((s) => (
                    <button
                        key={s.name}
                        className={clsx('flex items-center border-t border-[#8facd6] whitespace-nowrap', s.width, s.name === 'Лист2' && 'border-t-white bg-white font-bold')}
                    >
                        <svg width="14" height="16" viewBox="0 0 14 16" className="shrink-0" aria-hidden="true">
                            {s.name !== 'Лист2' && <path d="M1 16L13 0M2 16L14 0" stroke="#7f9fcd" fill="none" />}
                            {s.name !== 'Лист2' && <path d="M2.500 16L14 1" stroke="#fff" fill="none" />}
                        </svg>
                        <span className="flex-1 text-center">{s.name}</span>
                    </button>
                ))}
            </div>
            <div className="flex min-w-0 flex-1 bg-[#7797c8]">
                <span className="w-[5px] border border-[#6f8fb9] bg-white" />
                <span className="flex w-[17px] items-center justify-center"><Caret className="rotate-90 text-[#34486b]" /></span>
                <span className="flex h-4 flex-4 items-center justify-center gap-px rounded-[2px] border border-[#5d7095] bg-linear-to-b from-[#f3f6fa] via-[#dfe5ee] to-[#b3c0d8]">
                    {[0, 1, 2, 3].map((n) => (
                        <span key={n} className="h-[7px] w-px bg-[#8592ab]" />
                    ))}
                </span>
                <span className="flex-1" />
                <span className="flex w-[17px] items-center justify-center"><Caret className="-rotate-90 text-[#34486b]" /></span>
                <span className="w-[5px] border border-[#6f8fb9] bg-white" />
                <span className="w-4 bg-[#7797c8]" />
            </div>
        </div>
    )
}

function StatusBar() {
    const [zoom, setZoom] = useState(150)
    return (
        <footer className="flex h-[21px] items-center bg-linear-to-b from-[#dceafc] via-[#b6d1f5] to-[#d3e4fa] text-[#1d335e]">
            <span className="flex h-full w-[55px] items-center border-r border-[#8facd6] pl-[7px]">Готово</span>
            <div className="ml-auto flex h-full items-center gap-4 border-r border-[#8facd6] pr-2 whitespace-nowrap">
                <span>Среднее: 678,3333333</span>
                <span>Количество: 22</span>
                <span>Сумма: 8140</span>
            </div>
            <div className="ml-1.5 flex h-[19px] w-14 divide-x divide-[#8facd6] rounded-[2px] border border-[#8facd6] bg-[#d2e1f5]">
                <button aria-label="Обычный" className="flex flex-1 items-center justify-center bg-linear-to-b from-[#ffd89c] to-[#ffe7a8]">
                    <svg width="13" height="11" viewBox="0 0 13 11" fill="#fff" stroke="#6d6a63"><path d="M.5.5h12v10H.5zM0 4h13M0 7h13M4.500 0v11M8.500 0v11" /></svg>
                </button>
                <button aria-label="Разметка" className="flex flex-1 items-center justify-center">
                    <svg width="12" height="11" viewBox="0 0 12 11" fill="#fff" stroke="#6a7588"><path d="M.5.5h11v10H.5z" fill="#b9c4d6" /><path d="M3.500 2.500h5v6h-5zM5 4.500h2M5 6.500h2" /></svg>
                </button>
                <button aria-label="Страничный" className="flex flex-1 items-center justify-center">
                    <svg width="12" height="11" viewBox="0 0 12 11" stroke="#6a7588"><path d="M.5.5h11v10H.5z" fill="#b9c4d6" /><path d="M4.500.5v5h4v-5M6.500 0v5" fill="#fff" /></svg>
                </button>
            </div>
            <button className="ml-1.5 w-[34px] text-center">{zoom}%</button>
            <button aria-label="Уменьшить" className="ml-1 text-[#4f6285]" onClick={() => setZoom(zoom - 10)}>
                <svg width="16" height="16" viewBox="0 0 16 16"><circle cx="8" cy="8" r="7" fill="#e8f0fb" stroke="currentColor" /><path d="M4 8h8" stroke="currentColor" strokeWidth="2" /></svg>
            </button>
            <input
                type="range"
                aria-label="Масштаб"
                min="10"
                max="260"
                value={zoom}
                onChange={(e) => setZoom(Number(e.target.value))}
                className="h-3 w-[101px] appearance-none bg-[linear-gradient(#6781ab,#6781ab)] bg-[length:100%_1px] bg-center bg-no-repeat [&::-webkit-slider-thumb]:h-3 [&::-webkit-slider-thumb]:w-2.5 [&::-webkit-slider-thumb]:appearance-none [&::-webkit-slider-thumb]:rounded-b-full [&::-webkit-slider-thumb]:border [&::-webkit-slider-thumb]:border-[#4f6285] [&::-webkit-slider-thumb]:bg-[#e8f0fb]"
            />
            <button aria-label="Увеличить" className="mr-[5px] text-[#4f6285]" onClick={() => setZoom(zoom + 10)}>
                <svg width="16" height="16" viewBox="0 0 16 16"><circle cx="8" cy="8" r="7" fill="#e8f0fb" stroke="currentColor" /><path d="M4 8h8M8 4v8" stroke="currentColor" strokeWidth="2" /></svg>
            </button>
        </footer>
    )
}

/* ---------- taskbar ---------- */

function WordIcon({ plain }: { plain?: boolean }) {
    return (
        <svg width="15" height="16" viewBox="0 0 15 16" aria-hidden="true">
            {plain ? (
                <rect x=".5" y=".5" width="14" height="15" fill="#f4f7fd" stroke="#9db3dc" />
            ) : (
                <>
                    <path d="M4.500.5h7l3 3v12h-10z" fill="#fff" stroke="#8093b5" />
                    <path d="M10 6h3M10 8h3M6 11h7M6 13h7" stroke="#7f9fd0" />
                    <rect y="1" width="10" height="9" fill="#2c5cb4" />
                </>
            )}
            <path d={plain ? 'M2 4l2 8 3.500-7 1.500 7 4-8' : 'M1.500 3l1.500 5 2-4 2 4 1.500-5'} fill="none" stroke={plain ? '#2c4f9e' : '#fff'} strokeWidth={plain ? 2 : 1.3} />
        </svg>
    )
}

function ExcelIcon() {
    return (
        <svg width="15" height="16" viewBox="0 0 15 16" aria-hidden="true">
            <path d="M4.500.5h7l3 3v12h-10z" fill="#fff" stroke="#8093b5" />
            <path d="M10 6h3M10 8h3M6 11h7M6 13h7M9 10v5" stroke="#7fb07f" />
            <rect y="2" width="10" height="9" fill="#2f8f35" />
            <path d="M2.500 4l5 5M7.500 4l-5 5" stroke="#fff" strokeWidth="1.600" />
        </svg>
    )
}

function FolderIcon() {
    return (
        <svg width="15" height="13" viewBox="0 0 15 13" aria-hidden="true">
            <path d="M.5 2.500l1-2h4l1.500 2h6v9.500H.5z" fill="#f6cf57" stroke="#a77f1e" />
            <path d="M2.500 5.500h12l-1.500 7H1z" fill="#ffe999" stroke="#c19a30" />
        </svg>
    )
}

const TASKS = [
    { name: 'Лаб1 (готовая)', icon: <FolderIcon /> },
    { name: 'ЛАБ2 Марковчина (1...', icon: <WordIcon /> },
    { name: 'Методичка-эксель[...', icon: <WordIcon /> },
    { name: 'Книга1', icon: <ExcelIcon /> },
    { name: 'эксель', icon: <ExcelIcon />, active: true },
]

function Taskbar() {
    return (
        <div className="flex h-[30px] items-center border-t border-[#3c7ae8] bg-linear-to-b from-[#3f80ee] from-0% via-[#245edb] via-15% to-[#1f4fc4] text-white">
            <button className="flex h-full w-[96px] items-center gap-1 rounded-r-[10px] bg-linear-to-b from-[#5fae5d] via-[#3a9339] to-[#2f7f2f] pl-[9px] text-[17px] font-bold italic shadow-[inset_-3px_-2px_4px_rgba(0,60,0,0.5)]">
                <svg width="20" height="19" viewBox="0 0 20 19" aria-hidden="true">
                    <path d="M3.500 3C5.500 1.500 8 1.500 9.500 2.500L8 9C6 8 4 8 2 9z" fill="#ee5a2b" />
                    <path d="M10.800 3c2 1 5 1 7.200-.5L16.500 9c-2 1.500-5 1.500-7 .5z" fill="#7cc142" />
                    <path d="M1.700 10c2-1 4-1 6 0L6 16.500c-2-1-4-1-6 0z" fill="#4a8fe8" />
                    <path d="M9 10.500c2 1 5 1 7 0L14.500 17c-2 1-5 1-7 0z" fill="#fbc72b" />
                </svg>
                пуск
            </button>
            <div className="flex w-[102px] items-center gap-2 pl-3">
                <button aria-label="Internet Explorer">
                    <svg width="15" height="15" viewBox="0 0 15 15" fill="none" aria-hidden="true">
                        <path d="M12 10.500A5 5 0 1 1 12.500 7.500H3" stroke="#6cc1f7" strokeWidth="2.300" />
                        <path d="M1 13C-.5 11 9 .5 13.500 1.500c1 .5.500 2 0 3" stroke="#d4ecff" />
                    </svg>
                </button>
                <button aria-label="Сеть">
                    <svg width="15" height="12" viewBox="0 0 15 12" aria-hidden="true">
                        <path d="M0 9.500h15" stroke="#e3e3e3" strokeWidth="2" />
                        <path d="M7 1v7" stroke="#ddd" strokeWidth="2" />
                        <rect x="5" y="7" width="5" height="5" fill="#f2c438" stroke="#8a6a14" strokeWidth=".7" />
                    </svg>
                </button>
                <button aria-label="Word"><WordIcon plain /></button>
                <button aria-label="Еще" className="mb-3 ml-1 text-[14px] leading-none">»</button>
            </div>
            <div className="flex min-w-0 flex-1 gap-0.5">
                {TASKS.map((t) => (
                    <button
                        key={t.name}
                        className={clsx(
                            'flex h-[25px] w-[158px] items-center gap-1 rounded-[3px] pl-[9px] whitespace-nowrap',
                            t.active
                                ? 'bg-[#1e4fb0] shadow-[inset_1px_1px_2px_#12327a]'
                                : 'bg-linear-to-b from-[#5a96f8] via-[#3c81f0] to-[#3674e4] shadow-[inset_-1px_-1px_1px_#2258c0]'
                        )}
                    >
                        {t.icon}
                        {t.name}
                    </button>
                ))}
            </div>
            <button className="mr-3 bg-[#3b70cf] px-0.5">RL</button>
            <div className="flex h-full w-[93px] items-center gap-1 border-l border-[#0a4a9e] bg-linear-to-b from-[#35b5f5] via-[#1196e8] to-[#0f88d8] pl-2.5">
                <svg width="15" height="15" viewBox="0 0 15 15" aria-hidden="true">
                    <circle cx="6" cy="6" r="5.500" fill="#777" stroke="#333" />
                    <circle cx="5" cy="6" r="2.500" fill="#ccc" stroke="#444" />
                    <path d="M11 14c2-1 3-3 3-5M10 12c1-.5 2-2 2-3" stroke="#8fb0ff" fill="none" />
                </svg>
                <svg width="15" height="16" viewBox="0 0 15 16" aria-hidden="true">
                    <rect x=".5" y=".5" width="14" height="15" rx="1" fill="#fff" stroke="#cfe9e5" />
                    <path d="M6 3.500C1.500 4 1.500 12 6 12.500M9 3.500c4.500.5 4.500 8.500 0 9" stroke="#129f93" strokeWidth="2.300" fill="none" />
                </svg>
                <time className="ml-1">15:47</time>
            </div>
        </div>
    )
}

export default function App() {
    return (
        <div className="relative flex h-screen flex-col overflow-hidden bg-[#bfdbff] font-['Noto_Sans','Open_Sans',sans-serif] text-[11px] leading-4">
            <TitleBar />
            <MenuTabs />
            <Ribbon />
            <SecurityBar />
            <FormulaBar />
            <Worksheet />
            <SheetTabs />
            <StatusBar />
            <Taskbar />
            <button aria-label="Office" className="absolute top-[3px] left-px"><OfficeOrb /></button>
        </div>
    )
}
